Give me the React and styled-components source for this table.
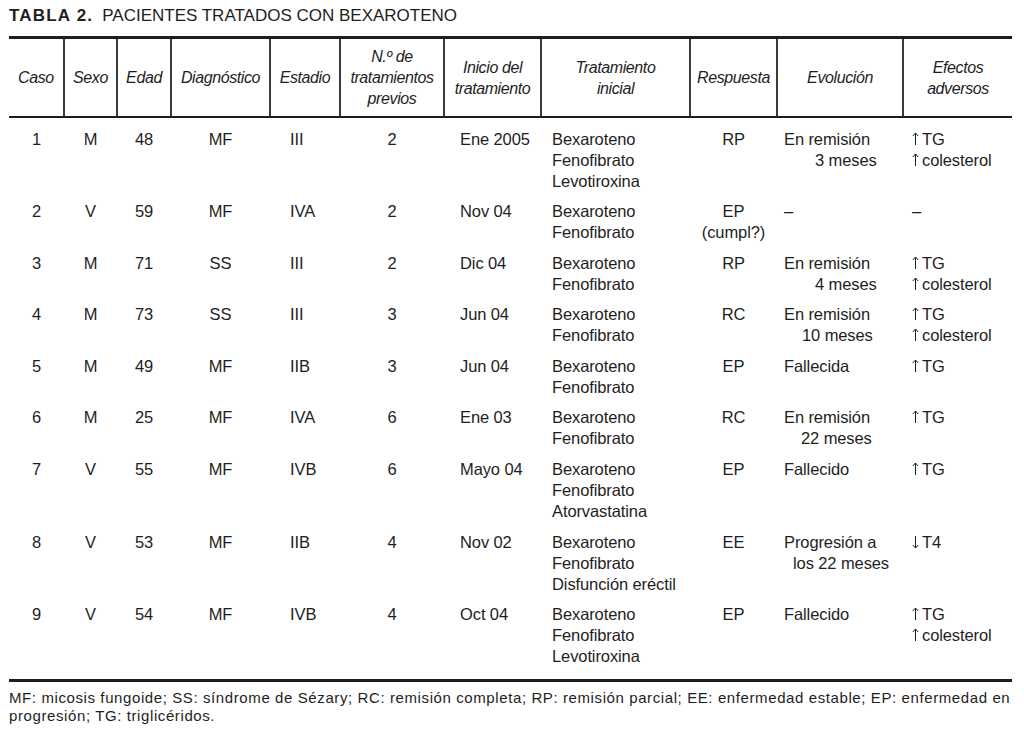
import React from "react";
import styled, { createGlobalStyle } from "styled-components";

const Global = createGlobalStyle`
  html, body { margin: 0; padding: 0; background: #fff; }
  body { color: #1e1e1e; font-family: "Liberation Sans", Arial, sans-serif; }
`;

const Page = styled.div`
  width: 1024px;
  height: 735px;
  box-sizing: border-box;
  padding: 6px 12px 0 9px;
  overflow: hidden;
`;

const Title = styled.h1`
  margin: 0;
  font-size: 17px;
  line-height: 20px;
  font-weight: 400;
  letter-spacing: 0;
  white-space: nowrap;
`;

const TitleLabel = styled.b`
  font-weight: 700;
  letter-spacing: 1.2px;
  margin-right: 9px;
`;

const Table = styled.table`
  margin-top: 10px;
  width: 1003px;
  table-layout: fixed;
  border-collapse: collapse;
  border-top: 3px solid #1e1e1e;
  border-bottom: 3px solid #1e1e1e;
  font-family: "Liberation Sans", Arial, sans-serif;
  font-size: 16.5px;
  letter-spacing: -0.1px;
`;

const HeadCell = styled.th`
  font-weight: 400;
  font-style: italic;
  font-size: 16px;
  letter-spacing: -0.4px;
  text-align: center;
  vertical-align: middle;
  line-height: 21px;
  height: 63px;
  padding: 7px 0;
  border-bottom: 2px solid #1e1e1e;
  border-left: ${(p) => (p.$first ? "none" : "2px solid #3a3a3a")};
  white-space: nowrap;
`;

const Cell = styled.td`
  vertical-align: top;
  line-height: 21px;
  text-align: ${(p) => p.$align || "center"};
  padding-top: ${(p) => (p.$firstRow ? "10.5px" : "5px")};
  padding-bottom: ${(p) => (p.$lastRow ? "11.5px" : "4.6px")};
  padding-left: ${(p) => p.$pl || 0}px;
  padding-right: 0;
  white-space: nowrap;
`;

const Line = styled.div`
  padding-left: ${(p) => p.$indent || 0}px;
`;

const ArrowIcon = styled.svg`
  display: inline-block;
  width: 7px;
  height: 14px;
  margin-right: 3px;
  vertical-align: -1px;
`;

const Footer = styled.p`
  margin: 7px 0 0;
  font-size: 15px;
  line-height: 18px;
  letter-spacing: 0.6px;
  white-space: nowrap;
  span { display: block; }
`;

const Arrow = ({ down }) => (
  <ArrowIcon viewBox="0 0 7 14" fill="none" stroke="#1e1e1e" strokeWidth="1">
    {down ? (
      <>
        <path d="M3.5 1 V13" />
        <path d="M0.8 10 L3.5 13 L6.2 10" />
      </>
    ) : (
      <>
        <path d="M3.5 1 V13" />
        <path d="M0.8 4 L3.5 1 L6.2 4" />
      </>
    )}
  </ArrowIcon>
);

const cols = [55, 53, 54, 99, 70, 104, 97, 149, 87, 126, 109];

const headers = [
  ["Caso"],
  ["Sexo"],
  ["Edad"],
  ["Diagnóstico"],
  ["Estadio"],
  ["N.º de", "tratamientos", "previos"],
  ["Inicio del", "tratamiento"],
  ["Tratamiento", "inicial"],
  ["Respuesta"],
  ["Evolución"],
  ["Efectos", "adversos"],
];

const BF = ["Bexaroteno", "Fenofibrato"];
const up = (t) => ({ arrow: "up", t });

const rows = [
  ["1", "M", "48", "MF", "III", "2", "Ene 2005", [...BF, "Levotiroxina"], ["RP"], [["En remisión"], ["3 meses", 31]], [up("TG"), up("colesterol")]],
  ["2", "V", "59", "MF", "IVA", "2", "Nov 04", BF, ["EP", "(cumpl?)"], [["–"]], ["–"]],
  ["3", "M", "71", "SS", "III", "2", "Dic 04", BF, ["RP"], [["En remisión"], ["4 meses", 31]], [up("TG"), up("colesterol")]],
  ["4", "M", "73", "SS", "III", "3", "Jun 04", BF, ["RC"], [["En remisión"], ["10 meses", 18]], [up("TG"), up("colesterol")]],
  ["5", "M", "49", "MF", "IIB", "3", "Jun 04", BF, ["EP"], [["Fallecida"]], [up("TG")]],
  ["6", "M", "25", "MF", "IVA", "6", "Ene 03", BF, ["RC"], [["En remisión"], ["22 meses", 17]], [up("TG")]],
  ["7", "V", "55", "MF", "IVB", "6", "Mayo 04", [...BF, "Atorvastatina"], ["EP"], [["Fallecido"]], [up("TG")]],
  ["8", "V", "53", "MF", "IIB", "4", "Nov 02", [...BF, "Disfunción eréctil"], ["EE"], [["Progresión a"], ["los 22 meses", 9]], [{ arrow: "down", t: "T4" }]],
  ["9", "V", "54", "MF", "IVB", "4", "Oct 04", [...BF, "Levotiroxina"], ["EP"], [["Fallecido"]], [up("TG"), up("colesterol")]],
];

const colAlign = [
  {},
  {},
  {},
  {},
  { $align: "left", $pl: 20 },
  {},
  { $align: "left", $pl: 16 },
  { $align: "left", $pl: 11 },
  {},
  { $align: "left", $pl: 7 },
  { $align: "left", $pl: 9 },
];

function renderContent(ci, v) {
  if (ci === 7 || ci === 8) return v.map((l, i) => <Line key={i}>{l}</Line>);
  if (ci === 9) return v.map(([l, ind], i) => <Line key={i} $indent={ind}>{l}</Line>);
  if (ci === 10)
    return v.map((e, i) =>
      typeof e === "string" ? (
        <Line key={i}>{e}</Line>
      ) : (
        <Line key={i}>
          <Arrow down={e.arrow === "down"} />
          {e.t}
        </Line>
      )
    );
  return v;
}

export default function App() {
  return (
    <Page>
      <Global />
      <Title>
        <TitleLabel>TABLA 2.</TitleLabel>PACIENTES TRATADOS CON BEXAROTENO
      </Title>
      <Table>
        <colgroup>
          {cols.map((w, i) => (
            <col key={i} style={{ width: w }} />
          ))}
        </colgroup>
        <thead>
          <tr>
            {headers.map((h, i) => (
              <HeadCell key={i} $first={i === 0}>
                {h.map((l, j) => (
                  <div key={j}>{l}</div>
                ))}
              </HeadCell>
            ))}
          </tr>
        </thead>
        <tbody>
          {rows.map((r, ri) => (
            <tr key={ri}>
              {r.map((v, ci) => (
                <Cell
                  key={ci}
                  {...colAlign[ci]}
                  $firstRow={ri === 0}
                  $lastRow={ri === rows.length - 1}
                >
                  {renderContent(ci, v)}
                </Cell>
              ))}
            </tr>
          ))}
        </tbody>
      </Table>
      <Footer>
        <span>
          MF: micosis fungoide; SS: síndrome de Sézary; RC: remisión completa; RP: remisión parcial; EE: enfermedad estable; EP: enfermedad en
        </span>
        <span>progresión; TG: triglicéridos.</span>
      </Footer>
    </Page>
  );
}
